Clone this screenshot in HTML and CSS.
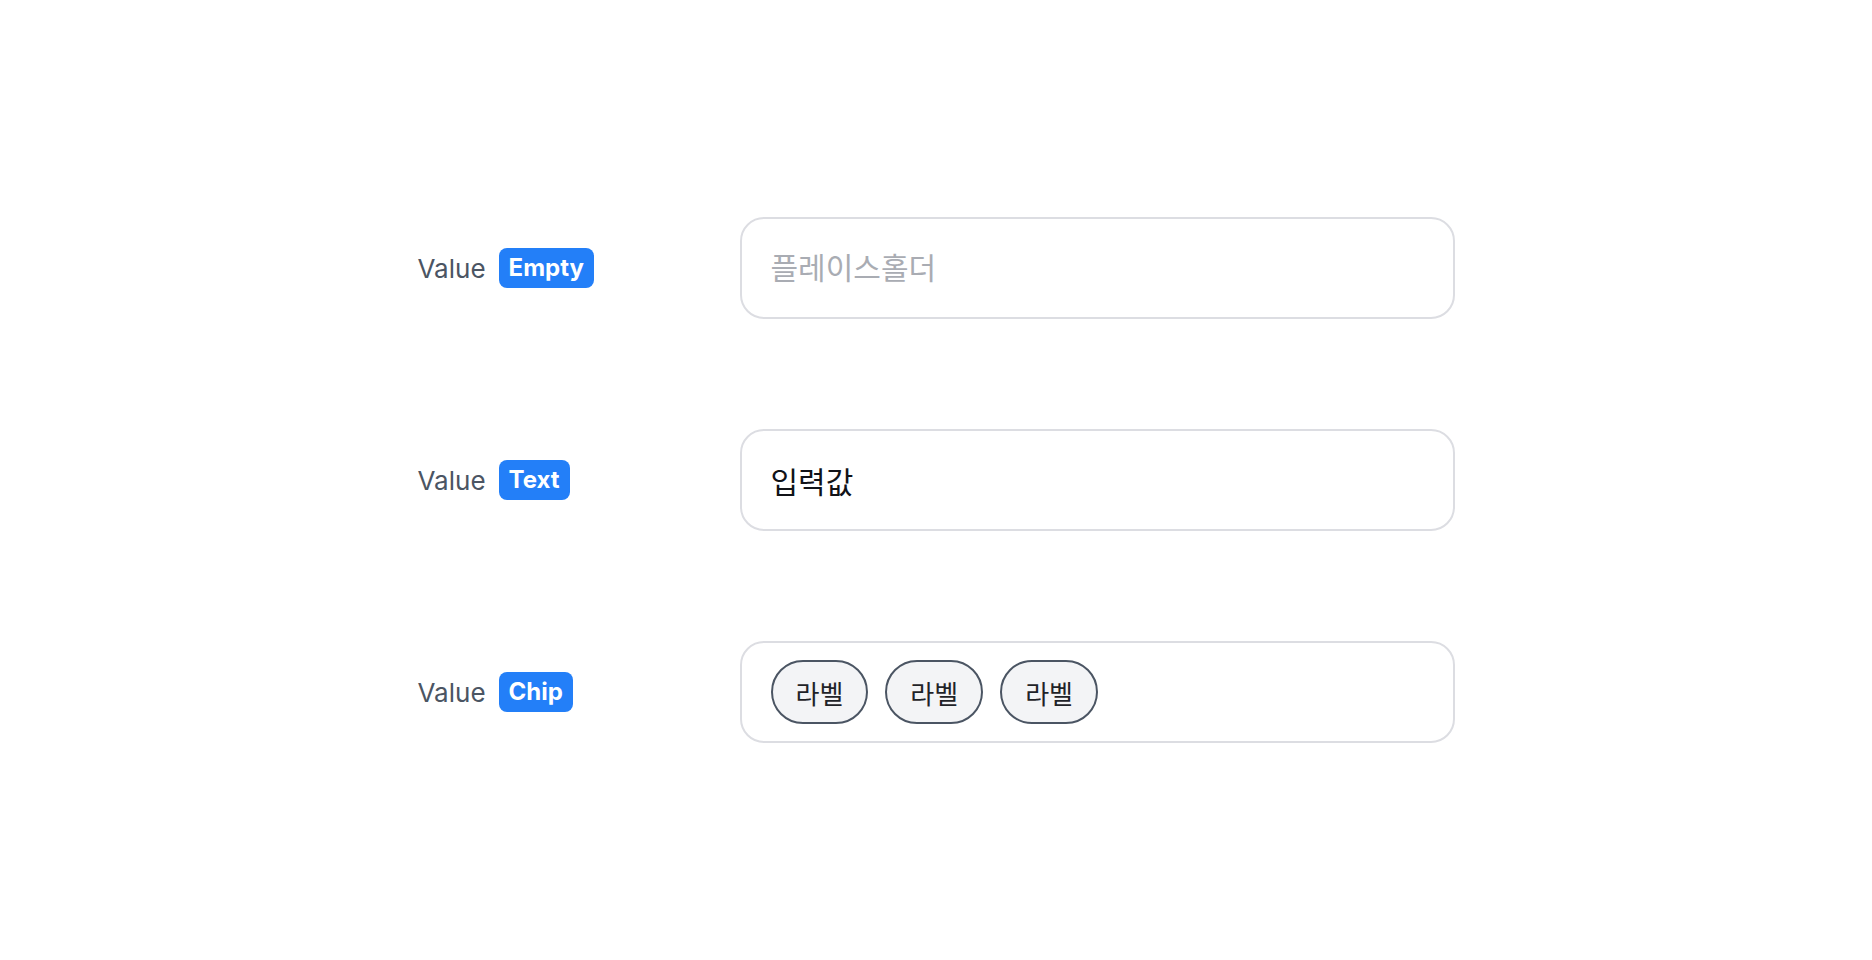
FILE: index.html
```html
<!DOCTYPE html>
<html lang="ko">

<head>
    <meta charset="UTF-8">
    <meta name="viewport" content="width=device-width, initial-scale=1.0">
    <title>Text Field</title>
    <link rel="stylesheet" href="styles.css">
</head>

<body>
    <div class="board">
        <div class="label">
            <span class="label-name">Value</span>
            <span class="badge">Empty</span>
        </div>
        <input class="field" type="text" placeholder="플레이스홀더">

        <div class="label">
            <span class="label-name">Value</span>
            <span class="badge">Text</span>
        </div>
        <input class="field" type="text" value="입력값">

        <div class="label">
            <span class="label-name">Value</span>
            <span class="badge">Chip</span>
        </div>
        <div class="field chips">
            <span class="chip">라벨</span>
            <span class="chip">라벨</span>
            <span class="chip">라벨</span>
        </div>
    </div>
</body>

</html>
```

FILE: styles.css
```css
body {
    margin: 0;
    height: 100vh;
    display: flex;
    align-items: center;
    justify-content: center;
    background-color: #ffffff;
    font-family: "Inter", "Noto Sans CJK KR", sans-serif;
}

.board {
    display: grid;
    grid-template-columns: 322px 715px;
    row-gap: 110px;
    align-items: center;
}

.label {
    display: flex;
    align-items: center;
    gap: 13px;
}

.label-name {
    font-size: 26px;
    color: #4b5563;
}

.badge {
    font-size: 24px;
    font-weight: 700;
    line-height: 32px;
    padding: 4px 10px;
    border-radius: 8px;
    background: #237ff8;
    color: #ffffff;
}

.field {
    box-sizing: border-box;
    width: 100%;
    height: 102px;
    border: 2px solid #dcdde2;
    border-radius: 24px;
    padding: 0 29px;
    font-family: "Inter", "Noto Sans CJK KR", sans-serif;
    font-size: 30px;
    color: #111318;
    background: #ffffff;
    outline: none;
}

.field::placeholder {
    color: #a9acb3;
}

.chips {
    display: flex;
    align-items: center;
    gap: 17px;
}

.chip {
    box-sizing: border-box;
    height: 64px;
    padding: 0 23px;
    display: flex;
    align-items: center;
    border: 2px solid #4b5563;
    border-radius: 999px;
    background: #f3f4f6;
    font-size: 26px;
    color: #1f2328;
}
```
